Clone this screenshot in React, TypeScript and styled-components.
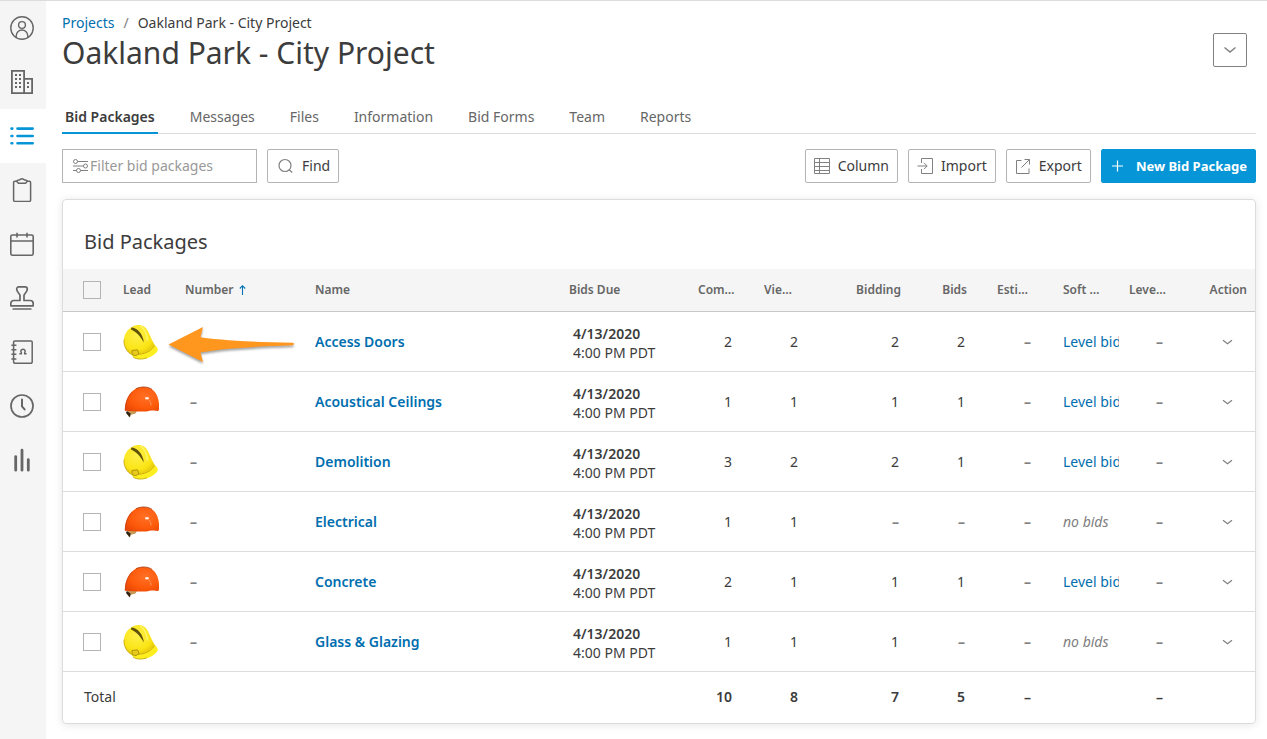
import React from "react";
import styled, { createGlobalStyle, css } from "styled-components";

const GlobalStyle = createGlobalStyle`
  *, *::before, *::after { box-sizing: border-box; }
  body {
    margin: 0;
    background: #fff;
    color: #3c3c3c;
    font-family: "Noto Sans", "Open Sans", sans-serif;
    font-size: 14px;
    line-height: 20px;
  }
  button, input { font: inherit; color: inherit; }
  a { text-decoration: none; }
`;

const Page = styled.div`
  display: flex;
  min-height: 100vh;
  border-top: 1px solid #dcdcdc;
`;

const SideNav = styled.nav`
  flex: 0 0 46px;
  background: #f5f5f5;
`;

const SideLink = styled.a<{ $active?: boolean }>`
  display: flex;
  align-items: center;
  height: 54px;
  padding-left: 10px;
  color: ${(p) => (p.$active ? "#0696d7" : "#666")};
  background: ${(p) => (p.$active ? "#fff" : "transparent")};
`;

const Main = styled.main`
  flex: 1;
  min-width: 0;
  padding: 12px 11px 15px 16px;
`;

const Header = styled.header`
  display: flex;
  justify-content: space-between;
  align-items: flex-end;
  padding-right: 9px;
`;

const Crumbs = styled.nav`
  display: flex;
  gap: 9px;
  a { color: #006eaf; }
  i { font-style: normal; color: #808080; }
`;

const Title = styled.h1`
  margin: 0;
  font-size: 30px;
  line-height: 40px;
  font-weight: 400;
`;

const MenuButton = styled.button`
  display: grid;
  place-items: center;
  width: 34px;
  height: 34px;
  margin-bottom: 6px;
  padding: 0;
  border: 1px solid #808080;
  border-radius: 2px;
  background: #fff;
  color: #808080;
`;

const Tabs = styled.nav`
  display: flex;
  gap: 29px;
  margin-top: 28px;
  border-bottom: 1px solid #dcdcdc;
`;

const Tab = styled.a<{ $active?: boolean }>`
  margin-bottom: -1px;
  padding: 6px 3px 5px;
  color: ${(p) => (p.$active ? "#3c3c3c" : "#666")};
  font-weight: ${(p) => (p.$active ? 600 : 400)};
  border-bottom: 2px solid ${(p) => (p.$active ? "#0696d7" : "transparent")};
`;

const Toolbar = styled.div`
  display: flex;
  gap: 10px;
  margin-top: 15px;
`;

const Spacer = styled.span`
  flex: 1;
`;

const FilterBox = styled.label`
  display: flex;
  align-items: center;
  gap: 1px;
  width: 195px;
  height: 34px;
  padding: 0 8px 0 10px;
  border: 1px solid #b4b4b4;
  color: #808080;
  input {
    flex: 1;
    min-width: 0;
    padding: 0;
    border: 0;
    outline: 0;
    background: none;
  }
  input::placeholder { color: #999; opacity: 1; }
`;

const ToolButton = styled.button<{ $primary?: boolean }>`
  display: flex;
  align-items: center;
  gap: 8px;
  height: 34px;
  padding: 0 8px;
  border: 1px solid #b4b4b4;
  border-radius: 2px;
  background: #fff;
  white-space: nowrap;
  svg { color: #808080; }
  ${(p) =>
    p.$primary &&
    css`
      gap: 10px;
      border-color: #0696d7;
      background: #0696d7;
      color: #fff;
      font-size: 13px;
      font-weight: 700;
      svg { color: #fff; }
    `}
`;

const Card = styled.section`
  margin-top: 16px;
  border: 1px solid #dcdcdc;
  border-radius: 4px;
  box-shadow: 0 1px 8px rgba(0, 0, 0, 0.1);
`;

const CardTitle = styled.h2`
  margin: 0;
  padding: 27px 21px 12px;
  font-size: 20px;
  line-height: 30px;
  font-weight: 400;
`;

const Table = styled.table`
  width: 100%;
  table-layout: fixed;
  border-collapse: collapse;
`;

const Col = styled.col<{ $w?: number }>`
  ${(p) => p.$w && `width: ${p.$w}px;`}
`;

const HeadRow = styled.tr`
  height: 42px;
  background: #f5f5f5;
  border-bottom: 1px solid #c8c8c8;
`;

const Row = styled.tr`
  height: 60px;
  border-bottom: 1px solid #dcdcdc;
`;

const TotalRow = styled.tr`
  height: 52px;
`;

const Th = styled.th<{ $end?: boolean; $last?: boolean }>`
  padding: 0 ${(p) => (p.$last ? 8 : p.$end ? 20 : 0)}px 0 10px;
  color: #666;
  font-size: 12px;
  font-weight: 600;
  text-align: ${(p) => (p.$end || p.$last ? "right" : "left")};
  white-space: nowrap;
`;

const Td = styled.td<{ $pad?: number }>`
  padding: 0 0 0 ${(p) => p.$pad ?? 10}px;
  overflow: hidden;
  white-space: nowrap;
  ${Row} & { padding-top: 2px; }
`;

const DueTd = styled(Td)`
  ${Row} && { padding-top: 4px; }
`;

const ArrowTd = styled(Td)`
  position: relative;
  overflow: visible;
`;

const NumTd = styled.td<{ $bold?: boolean }>`
  padding: 0 22px 0 0;
  text-align: right;
  font-weight: ${(p) => (p.$bold ? 600 : 400)};
  ${Row} & { padding-top: 2px; }
`;

const ActionTd = styled.td`
  padding: 0 22px 0 0;
  text-align: right;
`;

const Dash = styled.span`
  color: #808080;
  font-weight: 700;
`;

const Check = styled.input`
  display: block;
  appearance: none;
  width: 18px;
  height: 18px;
  margin: 0;
  border: 1px solid #b4b4b4;
  background: transparent;
`;

const NameLink = styled.a`
  color: #006eaf;
  font-weight: 600;
`;

const LevelLink = styled.a`
  color: #006eaf;
`;

const NoBids = styled.em`
  color: #808080;
`;

const Due = styled.time`
  display: block;
  line-height: 19px;
  b { display: block; font-weight: 600; }
`;

const RowButton = styled.button`
  padding: 0;
  border: 0;
  background: none;
  color: #808080;
  svg { display: block; }
`;

const SortIcon = styled.svg`
  margin-left: 6px;
  vertical-align: -2px;
`;

const Pointer = styled.svg`
  position: absolute;
  left: -8px;
  top: 12px;
  filter: drop-shadow(0 2px 1px rgba(0, 0, 0, 0.35));
`;

const Hat = styled.svg`
  display: block;
`;

const Icon = ({ size = 24, w = 1.5, children }: { size?: number; w?: number; children: React.ReactNode }) => (
  <svg
    width={size}
    height={size}
    viewBox={`0 0 ${size} ${size}`}
    fill="none"
    stroke="currentColor"
    strokeWidth={w}
    aria-hidden="true"
  >
    {children}
  </svg>
);

const sideItems: { label: string; active?: boolean; icon: React.ReactNode }[] = [
  {
    label: "Account",
    icon: (
      <Icon w={1.4}>
        <circle cx="12" cy="12" r="11.2" />
        <circle cx="12" cy="9" r="3.4" />
        <path d="M6.2 21.4v-1.6a5.8 5.8 0 0 1 11.6 0v1.6" />
      </Icon>
    ),
  },
  {
    label: "Company",
    icon: (
      <Icon w={1.8}>
        <path d="M1.9.9h12.2v22.2H1.9zM14.1 8.9h8v14.2h-8" />
        <path d="M5 5h2m2 0h2M5 9h2m2 0h2M5 13h2m2 0h2M5 17h2m2 0h2M17 13h2m-2 4h2" />
      </Icon>
    ),
  },
  {
    label: "Bid packages",
    active: true,
    icon: (
      <Icon w={2.6}>
        <path strokeLinecap="round" d="M7.5 4.6h15.2M7.5 12h15.2M7.5 19.3h15.2M1.5 4.6h.8M1.5 12h.8M1.5 19.3h.8" />
      </Icon>
    ),
  },
  {
    label: "Forms",
    icon: (
      <Icon>
        <path d="M7 3.2H4.8a1.2 1.2 0 0 0-1.2 1.2v17.8a1.2 1.2 0 0 0 1.2 1.2h14.6a1.2 1.2 0 0 0 1.2-1.2V4.4a1.2 1.2 0 0 0-1.2-1.2H17" />
        <path d="M6.8 3.4c0-1.1 1-1.3 2.4-1.4C10.3 1.9 10.6.8 12 .8s1.7 1.1 2.8 1.2c1.4.1 2.4.3 2.4 1.4L15.6 5.2H8.4z" strokeLinejoin="round" />
      </Icon>
    ),
  },
  {
    label: "Calendar",
    icon: (
      <Icon w={1.6}>
        <rect x=".8" y="3" width="22.4" height="20.2" rx="1.6" />
        <path d="M.8 9h22.4M7 .8v4.7M17 .8v4.7" />
      </Icon>
    ),
  },
  {
    label: "Approvals",
    icon: (
      <Icon w={1.7}>
        <path
          strokeLinejoin="round"
          d="M10 14.5V9.2C9.3 7.4 6.7 6 6.7 3.2 6.7 1.7 7.5.9 8.9.9h6.2c1.4 0 2.2.8 2.2 2.3 0 2.8-2.6 4.2-3.3 6v5.3h6.2a3 3 0 0 1 3 3v2.4H.8v-2.4a3 3 0 0 1 3-3z"
        />
        <path strokeLinecap="round" d="M3.2 23h17.6" />
      </Icon>
    ),
  },
  {
    label: "Contacts",
    icon: (
      <Icon>
        <rect x="3.6" y=".9" width="18.6" height="22.4" rx="1.2" />
        <path d="M1.4 5.2h5M1.4 9.8h5M1.4 14.3h5M1.4 18.9h5" />
        <path d="M9.4 13.7h1.9v-1.2c-1-1.4-.3-3.2 1.7-3.200s2.700 1.800 1.700 3.200v1.200h1.900" />
      </Icon>
    ),
  },
  {
    label: "History",
    icon: (
      <Icon w={1.7}>
        <circle cx="12" cy="12" r="11" />
        <path strokeLinecap="round" strokeWidth="2" d="M12 5.5v6.8l2.6 3.1" />
      </Icon>
    ),
  },
  {
    label: "Analytics",
    icon: (
      <Icon w={2.8}>
        <path strokeLinecap="round" d="M5.7 8.6v13.6M12 2.2v20M18.3 11.6v10.6" />
      </Icon>
    ),
  },
];

const YellowHat = () => (
  <Hat width="36" height="36" viewBox="0 0 36 36" role="img" aria-label="Yellow hard hat">
    <defs>
      <radialGradient id="yellowShell" cx=".4" cy=".35" r=".8">
        <stop offset="0" stopColor="#fff04a" />
        <stop offset=".6" stopColor="#fae414" />
        <stop offset="1" stopColor="#d2ad08" />
      </radialGradient>
    </defs>
    <path d="M7.5 4C11 .5 17 .3 20.5 2.2 25.5 5 27 13 31.5 20.5L33 26C27 31 14 32 8 30.5 3 27 .3 21.5 1 15.5 1.5 10 4 6.5 7.5 4z" fill="url(#yellowShell)" />
    <path d="M31.5 20.5c2 2 3.5 3.5 3.3 6C31 32.5 22 36 15.5 35.2 11.5 34.7 8.5 32 8 29.5c8 1.5 19-.5 23.5-9z" fill="#fdee20" />
    <path d="M9 30c8 1.5 18.5-1 22.5-8.5" fill="none" stroke="#cda80c" strokeWidth="1" />
    <path d="M10 33.2c4 2.2 9 2.4 14 .6" fill="none" stroke="#b79c20" strokeWidth=".7" />
    <path d="M8.3 3.400c6 .2 11.800 6.600 12.600 15C17.400 12 13.500 8 8 5.400z" fill="#5f5208" />
    <path d="M17 1.8c5 3 7 9 7.5 15" fill="none" stroke="#fff56c" strokeWidth="1.5" />
    <path d="M9 26.5l5.5-.7 1.5 3.6-3 2.3-4-1z" fill="#e8ca18" stroke="#a98c10" strokeWidth=".9" />
    <path d="M1 15.500c-.4 5 1.500 10.500 6.500 14.500" fill="none" stroke="#bb960b" strokeWidth=".7" />
  </Hat>
);

const OrangeHat = () => (
  <Hat width="36" height="36" viewBox="0 0 36 36" role="img" aria-label="Orange hard hat">
    <defs>
      <radialGradient id="orangeShell" cx=".6" cy=".4" r=".75">
        <stop offset="0" stopColor="#ff7026" />
        <stop offset=".6" stopColor="#fd5a0a" />
        <stop offset="1" stopColor="#e64406" />
      </radialGradient>
    </defs>
    <path d="M4.5 26.5l9.5.5-1.5 2.5-4.5 1.2-2 2.3-1.8-3z" fill="#c89a5a" />
    <path d="M3.8 27l3.8 2.5-.6 4-4-4.5z" fill="#2d2117" />
    <path d="M2 26.8C1.6 19 4.5 11 10.5 6.2 16 1.8 26 2 31 7c4 4 5.6 11.5 5 18.5-.3 1.6-1.8 1.6-3.5 1.3-4-.6-6 .3-9.5.7-7 .5-14-.7-21-.7z" fill="url(#orangeShell)" />
    <path d="M13 4.8C17 2.4 25 2.2 29 5.4" fill="none" stroke="#a53a10" strokeWidth=".8" />
    <path d="M2.2 26.6c.2-7 2.3-13.6 7-18.6" fill="none" stroke="#c8461a" strokeWidth=".8" />
    <ellipse cx="24" cy="14.2" rx="2" ry="1.3" fill="#ffe9da" />
    <path d="M26 16c1.5 1.5 2 3.5 2 5.5" fill="none" stroke="#ff965a" strokeWidth="1" />
  </Hat>
);

const Chevron = ({ large }: { large?: boolean }) => (
  <svg
    width={large ? 14 : 11}
    height="8"
    viewBox={large ? "0 0 14 8" : "0 0 11 8"}
    fill="none"
    stroke="currentColor"
    strokeWidth={large ? 1.5 : 1.2}
    aria-hidden="true"
  >
    <path d={large ? "M1.5 1.5L7 6l5.500-4.500" : "M1 2.200l4.500 3.600L10 2.200"} />
  </svg>
);

const rows = [
  { name: "Access Doors", yellow: true, counts: ["2", "2", "2", "2"] },
  { name: "Acoustical Ceilings", yellow: false, counts: ["1", "1", "1", "1"] },
  { name: "Demolition", yellow: true, counts: ["3", "2", "2", "1"] },
  { name: "Electrical", yellow: false, counts: ["1", "1", "–", "–"] },
  { name: "Concrete", yellow: false, counts: ["2", "1", "1", "1"] },
  { name: "Glass & Glazing", yellow: true, counts: ["1", "1", "1", "–"] },
];

const tabs = ["Bid Packages", "Messages", "Files", "Information", "Bid Forms", "Team", "Reports"];

const colWidths = [50, 62, 130, undefined, 129, 66, 66, 101, 66, 66, 66, 66, 70];

export default function App() {
  return (
    <>
      <GlobalStyle />
      <Page>
        <SideNav aria-label="Main">
          {sideItems.map((s) => (
            <SideLink key={s.label} href="#" $active={s.active} aria-label={s.label}>
              {s.icon}
            </SideLink>
          ))}
        </SideNav>
        <Main>
          <Header>
            <div>
              <Crumbs aria-label="Breadcrumb">
                <a href="#">Projects</a>
                <i>/</i>
                <span>Oakland Park - City Project</span>
              </Crumbs>
              <Title>Oakland Park - City Project</Title>
            </div>
            <MenuButton aria-label="Project menu">
              <Chevron large />
            </MenuButton>
          </Header>
          <Tabs aria-label="Project sections">
            {tabs.map((t, i) => (
              <Tab key={t} href="#" $active={i === 0}>
                {t}
              </Tab>
            ))}
          </Tabs>
          <Toolbar>
            <FilterBox>
              <Icon size={16} w={1}>
                <path d="M4.5 3.5H15M0 8h10.5M0 12.5h3.5M7.5 12.5H15" />
                <circle cx="2.5" cy="3.5" r="2" />
                <circle cx="12.5" cy="8" r="2" />
                <circle cx="5.5" cy="12.5" r="2" />
              </Icon>
              <input type="text" placeholder="Filter bid packages" aria-label="Filter bid packages" />
            </FilterBox>
            <ToolButton>
              <Icon size={18} w={1.2}>
                <circle cx="9" cy="8.5" r="6" />
                <path d="M13.2 12.8l3 2.7" />
              </Icon>
              Find
            </ToolButton>
            <Spacer />
            <ToolButton>
              <Icon size={16} w={1}>
                <path d="M.5.5h15v15H.5zM.5 4.5h15M.5 8.5h15M.5 12.5h15M5.5.5v15" />
              </Icon>
              Column
            </ToolButton>
            <ToolButton>
              <Icon size={16} w={1}>
                <path d="M4.5 5V.5h11v15h-11V11M.5 8h9.500M7 4.800L10.200 8 7 11.200" />
              </Icon>
              Import
            </ToolButton>
            <ToolButton>
              <Icon size={16} w={1}>
                <path d="M6.5 2.500h-5v13h12.500v-5M6.500 9.500l8-8M9.500 1.500h5v5" />
              </Icon>
              Export
            </ToolButton>
            <ToolButton $primary>
              <Icon size={16} w={1.2}>
                <path d="M7.5 2.5v11M2 8h11" />
              </Icon>
              New Bid Package
            </ToolButton>
          </Toolbar>
          <Card>
            <CardTitle>Bid Packages</CardTitle>
            <Table>
              <colgroup>
                {colWidths.map((w, i) => (
                  <Col key={i} $w={w} />
                ))}
              </colgroup>
              <thead>
                <HeadRow>
                  <Td $pad={20}>
                    <Check type="checkbox" aria-label="Select all" />
                  </Td>
                  <Th>Lead</Th>
                  <Th>
                    Number
                    <SortIcon width="7" height="12" viewBox="0 0 7 12" fill="none" stroke="#0672b4" strokeWidth="1.1" aria-hidden="true">
                      <path d="M3.5 11V2M.8 4.5l2.7-2.8 2.700 2.800" />
                    </SortIcon>
                  </Th>
                  <Th>Name</Th>
                  <Th>Bids Due</Th>
                  <Th>Com…</Th>
                  <Th>Vie…</Th>
                  <Th $end>Bidding</Th>
                  <Th $end>Bids</Th>
                  <Th>Esti…</Th>
                  <Th>Soft …</Th>
                  <Th>Leve…</Th>
                  <Th $last>Action</Th>
                </HeadRow>
              </thead>
              <tbody>
                {rows.map((r, i) => (
                  <Row key={r.name}>
                    <Td $pad={20}>
                      <Check type="checkbox" aria-label={`Select ${r.name}`} />
                    </Td>
                    <Td>{r.yellow ? <YellowHat /> : <OrangeHat />}</Td>
                    {i === 0 ? (
                      <ArrowTd>
                        <Pointer width="130" height="40" viewBox="0 0 130 40" aria-hidden="true">
                          <path d="M1.5 20.5L36 3l-2.5 10.2C60 17 95 18.3 126 18.7q2 1 0 2.6C95 22.5 60 23.5 33.5 28.5L36 38z" fill="#ff961e" />
                        </Pointer>
                      </ArrowTd>
                    ) : (
                      <Td $pad={15}>
                        <Dash>–</Dash>
                      </Td>
                    )}
                    <Td>
                      <NameLink href="#">{r.name}</NameLink>
                    </Td>
                    <DueTd $pad={14}>
                      <Due>
                        <b>4/13/2020</b>
                        4:00 PM PDT
                      </Due>
                    </DueTd>
                    {r.counts.map((c, k) => (
                      <NumTd key={k}>{c === "–" ? <Dash>–</Dash> : c}</NumTd>
                    ))}
                    <NumTd>
                      <Dash>–</Dash>
                    </NumTd>
                    <Td>{r.counts[3] === "–" ? <NoBids>no bids</NoBids> : <LevelLink href="#">Level bids</LevelLink>}</Td>
                    <NumTd>
                      <Dash>–</Dash>
                    </NumTd>
                    <ActionTd>
                      <RowButton aria-label={`Actions for ${r.name}`}>
                        <Chevron />
                      </RowButton>
                    </ActionTd>
                  </Row>
                ))}
              </tbody>
              <tfoot>
                <TotalRow>
                  <Td $pad={21} colSpan={5}>
                    Total
                  </Td>
                  {["10", "8", "7", "5", "–"].map((v) => (
                    <NumTd key={v} $bold>
                      {v}
                    </NumTd>
                  ))}
                  <Td />
                  <NumTd $bold>–</NumTd>
                  <Td />
                </TotalRow>
              </tfoot>
            </Table>
          </Card>
        </Main>
      </Page>
    </>
  );
}
